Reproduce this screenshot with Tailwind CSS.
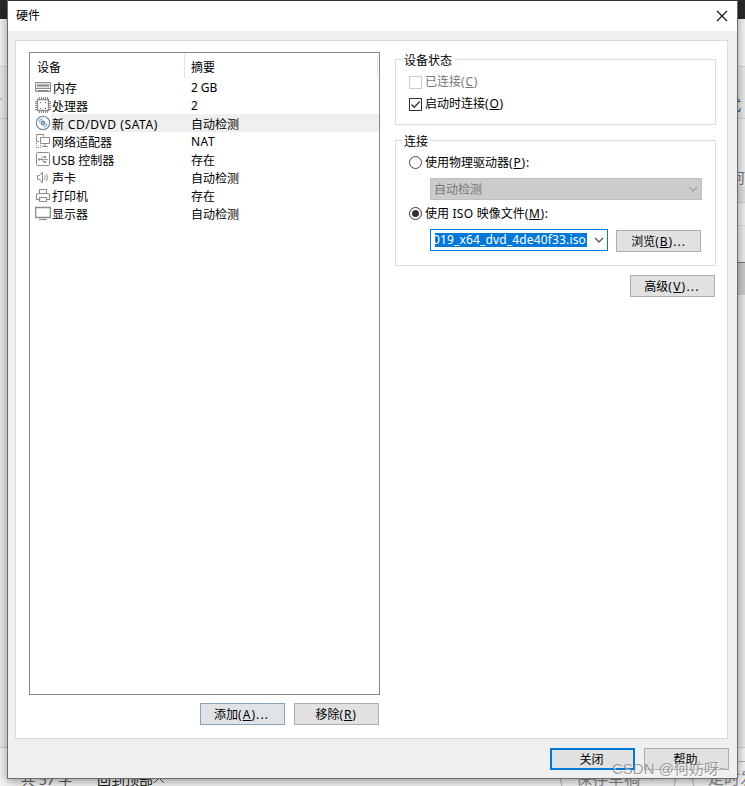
<!DOCTYPE html>
<html lang="zh-CN">

<head>
    <meta charset="UTF-8">
    <meta name="viewport" content="width=device-width, initial-scale=1.0">
    <title>硬件</title>
    <script src="https://cdn.jsdelivr.net/npm/@tailwindcss/browser@4"></script>
</head>

<body class="relative w-[745px] h-[786px] overflow-hidden bg-[#e2e2e2] text-black text-[12px] leading-[18px] font-['Noto_Sans','Noto_Sans_CJK_SC',sans-serif]">
    <!-- Page behind the dialog -->
    <div class="flex flex-col h-[786px] overflow-hidden">
        <div class="h-[19px] bg-[#2a2a2a]"></div>
        <div class="h-12 bg-[#f6f6f6] border-b border-[#d5d5d5]"></div>
        <div class="h-[52px] bg-[#eaeaea] border-b border-[#cccccc] flex items-center justify-between">
            <span class="w-[2px] h-[2px] mt-3 bg-[#8fd0ee]"></span>
            <span class="w-2 overflow-hidden text-[14px] text-[#34466b] pt-6 flex justify-end"><span class="mr-1">式</span></span>
        </div>
        <div class="flex h-[176px]">
            <div class="grow bg-[#ececec]"></div>
            <div class="w-2 flex flex-col">
                <div class="h-[67px] bg-[#f0f0f0] flex items-end overflow-hidden justify-end text-[15px] text-[#777]">何</div>
                <div class="h-[17px] bg-[#e2e2e2] border-b border-[#cfcfcf]"></div>
                <div class="h-[23px] bg-[#f0f0f0] border-b border-[#d6d6d6]"></div>
                <div class="h-[37px] bg-[#ececec] border-b border-[#777]"></div>
                <div class="h-8 bg-[#c9cacc]"></div>
            </div>
        </div>
        <div class="grow bg-[#e9eaec]"></div>
        <div class="h-[39px] bg-[#f4f4f4] border-t border-[#cbcbcb] relative text-[14px] text-[#555] leading-5">
            <span class="absolute left-[21px] top-[22px]">共 57 字</span>
            <div class="absolute left-[97px] top-[22px] flex items-center text-[#222]">回到顶部
                <svg class="w-3 h-2 -mt-px" viewBox="0 0 12 8" fill="none" stroke="#555"><path d="M1 7l5-5 5 5" /></svg>
            </div>
            <div class="absolute left-[560px] top-[13px] w-[116px] h-9 rounded-full border border-[#aaaaaf] text-[#85858d] text-[16px] pt-[6px] pl-[15px] flex gap-2">保存草稿
                <svg class="w-2 h-[5px] mt-[7px]" viewBox="0 0 8 5" fill="#85858d"><path d="M0 0h8L4 5z" /></svg>
            </div>
            <div class="absolute left-[692px] top-[13px] w-[116px] h-9 rounded-full border border-[#aaaaaf] text-[#85858d] text-[16px] pt-[6px] pl-[15px] whitespace-nowrap">定时发布</div>
        </div>
    </div>

    <!-- Hardware dialog -->
    <div class="absolute left-[7px] top-0 w-[731px] h-[779px] border border-[#6c6c6c] border-t-[#333] bg-[#efefef] shadow-[0_2px_10px_rgba(0,0,0,0.4)] flex flex-col">
        <div class="h-[30px] bg-white flex items-center justify-between pl-2 pr-[9px]">
            <span>硬件</span>
            <svg class="w-3 h-3" viewBox="0 0 12 12" fill="none" stroke="#111" stroke-width="1.1"><path d="M1 1l10 10M11 1L1 11" /></svg>
        </div>

        <div class="mt-[9px] ml-[7px] w-[713px] h-[699px] bg-white border border-[#dadada] flex pl-[13px] pt-[11px] gap-[15px]">
            <!-- Device list -->
            <div class="w-[351px]">
                <div class="h-[643px] border border-[#828790] pt-px">
                    <div class="h-6 flex pl-[7px] leading-[27px]">
                        <span class="w-[148px] border-r border-[#e5e5e5]">设备</span>
                        <span class="grow pl-[6px]">摘要</span>
                        <span class="w-[2px] border-l border-[#e5e5e5]"></span>
                    </div>

                    <div class="flex h-[18px] pl-[5px]">
                        <svg class="w-4 h-[18px]" viewBox="0 0 16 18" fill="none" stroke="#8c8c8c"><path d="M.5 4.500h15v9H.5z" fill="#e4e4e4" /><path d="M2 6.500h12v2H2z" fill="#8c8c8c" stroke="none" /><path d="M2 7.500h3m1 0h4m1 0h3" /><path d="M1 10.500h14M3 12.500h10" /><path d="M2 11.500h12" stroke="#fff" /></svg>
                        <div class="grow flex leading-[21px]"><span class="w-[140px] pl-[2px]">内存</span><span class="leading-[19px] tracking-[-.1px]">2 GB</span></div>
                    </div>
                    <div class="flex h-[18px] pl-[5px]">
                        <svg class="w-4 h-[18px]" viewBox="0 0 16 18" fill="none" stroke="#8c8c8c"><path d="M2.500 3.500h11v11h-11z" stroke-width="1.300" /><path d="M4.500 1v2m2-2v2m2-2v2m2-2v2m2-2v2M4.500 15v2m2-2v2m2-2v2m2-2v2m2-2v2M0 5.500h2M0 7.500h2M0 9.500h2M0 11.500h2M0 13.500h2M14 5.500h2M14 7.500h2M14 9.500h2M14 11.500h2M14 13.500h2" /><path d="M5 6.500h1m4 0h1M5 12.500h1m4 0h1" stroke="#666" /></svg>
                        <div class="grow flex leading-[21px]"><span class="w-[140px] pl-[1px]">处理器</span><span class="leading-[19px]">2</span></div>
                    </div>
                    <div class="flex h-[18px] pl-[5px]">
                        <svg class="w-4 h-[18px]" viewBox="0 0 16 18" fill="none" stroke="#7189a0"><circle cx="8" cy="9" r="6.700" stroke-width="1.100" /><circle cx="8" cy="9" r="1.600" stroke-width="1.600" /><path d="M4 8.500a4 4 0 0 1 3.500-3.500M12 9.500a4 4 0 0 1-3.500 3.500" stroke="#a3c5de" stroke-width="1.800" /></svg>
                        <div class="grow flex leading-[21px] bg-[#efefef]"><span class="w-[140px] pl-[1px] whitespace-pre">新<span class="tracking-[.58px]"> CD/DVD (SATA)</span></span><span>自动检测</span></div>
                    </div>
                    <div class="flex h-[18px] pl-[5px]">
                        <svg class="w-4 h-[18px]" viewBox="0 0 16 18" fill="none" stroke="#8c8c8c"><path d="M4 9.500H1.500v-7h7v2" /><path d="M5.500 5.500h9v6h-9zM10 12v2M7 14.500h6" /><path d="M1.500 11v5M1 15.500h5M5.500 13v3" stroke-dasharray="1 1" /></svg>
                        <div class="grow flex leading-[21px]"><span class="w-[140px] pl-[1px]">网络适配器</span><span class="leading-[19px] tracking-[.5px]">NAT</span></div>
                    </div>
                    <div class="flex h-[18px] pl-[5px]">
                        <svg class="w-4 h-[18px]" viewBox="0 0 16 18" fill="none" stroke="#8c8c8c"><rect x="1.500" y="2.500" width="13" height="13" rx="1" /><path d="M4 9.500h8M5.500 9.500l2-2.500h2M7 9.500l1.500 2.500h2" stroke-width=".9" /><path d="M3 8.500h2v2H3zM9 6h2v2H9zM9 11h2v2H9zM11.500 8.500l1.500 1-1.500 1z" fill="#8c8c8c" stroke="none" /></svg>
                        <div class="grow flex leading-[21px]"><span class="w-[140px] pl-[1px]">USB 控制器</span><span>存在</span></div>
                    </div>
                    <div class="flex h-[18px] pl-[5px]">
                        <svg class="w-4 h-[18px]" viewBox="0 0 16 18" fill="none" stroke="#8c8c8c"><path d="M2.500 7.500h2l3-3.500v11l-3-3.500h-2z" /><path d="M9.500 7.500q1.200 2 0 4M11.500 6q2 3.500 0 7" /></svg>
                        <div class="grow flex leading-[21px]"><span class="w-[140px] pl-[1px]">声卡</span><span>自动检测</span></div>
                    </div>
                    <div class="flex h-[18px] pl-[5px]">
                        <svg class="w-4 h-[18px]" viewBox="0 0 16 18" fill="none" stroke="#8c8c8c" stroke-width="1.100"><path d="M4.500 7.500v-4h7v4" /><path d="M4 13.500H1.500V9q0-1.500 1.500-1.500h10q1.500 0 1.500 1.500v4.500H12M4.500 11.500h7v4h-7z" /></svg>
                        <div class="grow flex leading-[21px]"><span class="w-[140px] pl-[1px]">打印机</span><span>存在</span></div>
                    </div>
                    <div class="flex h-[18px] pl-[5px]">
                        <svg class="w-4 h-[18px]" viewBox="0 0 16 18" fill="none" stroke="#8c8c8c"><path d="M.7 3.500h14.600v10H.7z" stroke-width="1.300" /><path d="M4 15.500h8" /></svg>
                        <div class="grow flex leading-[21px]"><span class="w-[140px] pl-[1px]">显示器</span><span>自动检测</span></div>
                    </div>
                </div>
                <div class="flex justify-end gap-[9px] mt-2 pr-px">
                    <button class="w-[85px] h-[22px] bg-[#e1e4e6] border border-[#8ba3b8] leading-[22px] pr-[2px]">添加<span class="tracking-[1.1px]">(<u>A</u>)...</span></button>
                    <button class="w-[85px] h-[22px] bg-[#e1e1e1] border border-[#adadad] leading-[22px] pr-px">移除<span class="tracking-[.8px]">(<u>R</u>)</span></button>
                </div>
            </div>

            <!-- Device settings -->
            <div class="w-[321px] pt-[7px]">
                <div class="h-[66px] border border-[#dcdcdc] pl-[6px]">
                    <div class="-mt-[9px] h-[18px] w-[53px] bg-white pl-[2px] leading-[20px]">设备状态</div>
                    <div class="flex items-center h-[22px] pl-[7px] mt-[2px] text-[#787878]">
                        <span class="w-[13px] h-[13px] border border-[#cccccc] mr-[3px]"></span>已连接<span class="tracking-[.8px]">(<u>C</u>)</span>
                    </div>
                    <div class="flex items-center h-[22px] pl-[7px]">
                        <span class="w-[13px] h-[13px] border border-[#333] mr-[3px]">
                            <svg class="w-[11px] h-[11px]" viewBox="0 0 11 11" fill="none" stroke="#333" stroke-width="1.3"><path d="M1.500 5.500l2.700 2.700L9.700 2.500" /></svg>
                        </span>启动时连接<span class="tracking-[.8px]">(<u>O</u>)</span>
                    </div>
                </div>

                <div class="mt-[15px] h-[126px] border border-[#dcdcdc] pl-[6px]">
                    <div class="-mt-[9px] h-[18px] w-[28px] bg-white pl-[2px] leading-[20px]">连接</div>
                    <div class="flex items-center h-[22px] pl-[7px] mt-px">
                        <span class="w-[13px] h-[13px] rounded-full border border-[#444] mr-[3px]"></span><span class="pt-px">使用物理驱动器<span class="tracking-[.8px]">(<u>P</u>):</span></span>
                    </div>
                    <div class="ml-[28px] mt-[5px] w-[272px] h-[22px] bg-[#cccccc] border border-[#bfbfbf] text-[#787878] flex items-center justify-between pl-[3px] pr-[3px]">
                        <span class="pt-px">自动检测</span>
                        <svg class="w-[10px] h-[6px]" viewBox="0 0 10 6" fill="none" stroke="#a0a0a0" stroke-width="1.1"><path d="M1 1l4 4 4-4" /></svg>
                    </div>
                    <div class="flex items-center h-[22px] pl-[7px] mt-[2px]">
                        <span class="w-[13px] h-[13px] rounded-full border border-[#333] mr-[3px] flex items-center justify-center"><span class="w-[7px] h-[7px] rounded-full bg-[#333]"></span></span>
                        <span class="whitespace-pre pt-px">使用<span class="tracking-[.3px]"> ISO </span>映像文件<span class="tracking-[.6px]">(<u>M</u>):</span></span>
                    </div>
                    <div class="ml-[28px] mt-[5px] flex gap-2">
                        <div class="w-[178px] h-[22px] bg-white border border-[#0078d7] flex items-center pl-1">
                            <span class="w-[152px] h-[14px] bg-[#0078d7] text-white leading-[14px] tracking-[.15px] overflow-hidden flex justify-end mb-px pr-px">019_x64_dvd_4de40f33.iso</span>
                            <svg class="w-[10px] h-[6px] ml-[7px]" viewBox="0 0 10 6" fill="none" stroke="#444" stroke-width="1.1"><path d="M1 1l4 4 4-4" /></svg>
                        </div>
                        <button class="w-[85px] h-[22px] mt-px bg-[#e1e1e1] border border-[#adadad] leading-[22px]">浏览<span class="tracking-[1px]">(<u>B</u>)...</span></button>
                    </div>
                </div>
                <div class="flex justify-end mt-[9px] pr-px">
                    <button class="w-[85px] h-[22px] bg-[#e1e1e1] border border-[#adadad] leading-[22px] pr-px">高级<span class="tracking-[1.2px]">(<u>V</u>)...</span></button>
                </div>
            </div>
        </div>

        <div class="flex justify-end gap-[9px] mt-[9px] pr-2">
            <button class="w-[85px] h-[22px] bg-[#e1e1e1] border-2 border-[#0078d7] leading-[20px] pr-[2px]">关闭</button>
            <button class="w-[85px] h-[22px] bg-[#e1e1e1] border border-[#adadad] leading-[22px] pr-[2px]">帮助</button>
        </div>
    </div>

    <!-- Watermark -->
    <div class="absolute left-[612px] top-[759px] text-[15px] leading-5 whitespace-nowrap text-[#888]/80 [text-shadow:1px_1px_0_rgba(255,255,255,0.6)] font-['Liberation_Sans','Noto_Sans_CJK_SC',sans-serif]">CSDN @何妨呀~</div>
</body>

</html>
